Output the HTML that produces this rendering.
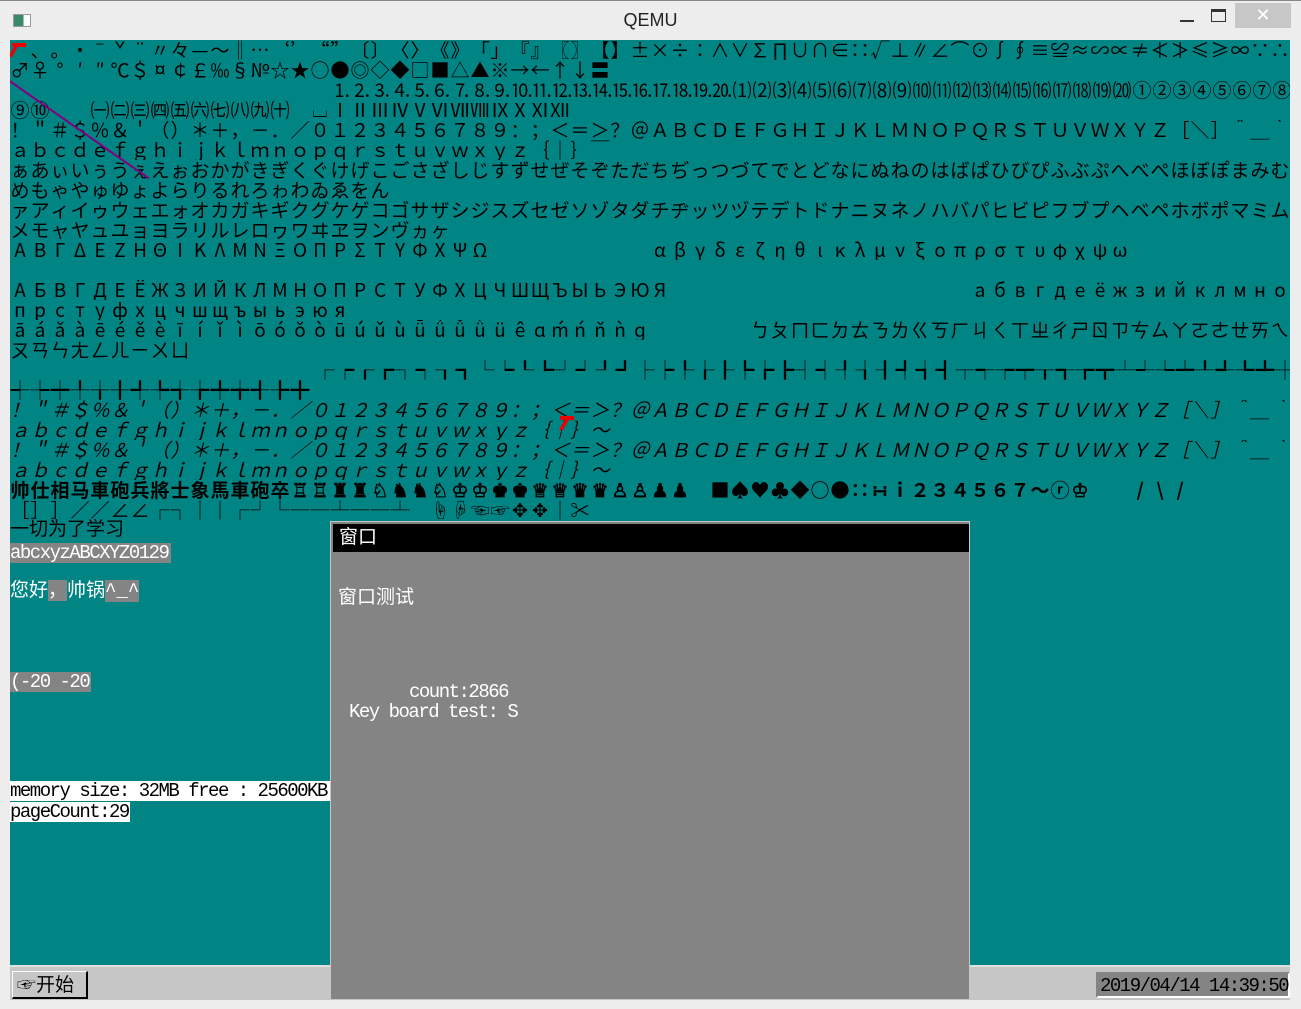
<!DOCTYPE html>
<html><head><meta charset="utf-8"><style>
*{margin:0;padding:0;box-sizing:border-box}
body{width:1301px;height:1009px;background:#ededed;position:relative;overflow:hidden;font-family:"Liberation Sans",sans-serif}
.title{position:absolute;top:0;left:0;width:1301px;height:40px;background:#ededed;border-top:1px solid #888}
.title .t{position:absolute;left:0;width:1301px;top:9px;text-align:center;font-size:18px;color:#222}
.screen{position:absolute;left:10px;top:40px;width:1280px;height:960px;background:#008484;overflow:hidden}
.row{position:absolute;left:0;height:20px;line-height:20px;font-size:19px;white-space:nowrap;color:#000;font-family:"Noto Sans CJK SC","WenQuanYi Zen Hei",sans-serif;overflow:hidden;width:1280px}
.row span{display:inline-block;width:20px;text-align:center;overflow:visible}
.m{position:absolute;font-family:"Liberation Mono",monospace;font-size:19px;line-height:20px;height:20px;letter-spacing:-1.5px;white-space:nowrap}
.cj{font-family:"Liberation Sans","Noto Sans CJK SC",sans-serif}
.task{position:absolute;left:0;top:925px;width:1280px;height:35px;background:#c6c6c6;border-top:2px solid #e0e0e0}
.win{position:absolute;left:320px;top:481px;width:640px;height:479px;background:#848484;border:1px solid #c6c6c6}
.wt{position:absolute;left:2px;top:2px;right:0;height:28px;background:#000;color:#fff;font-size:19px;line-height:28px;padding-left:6px}
</style></head><body>
<div class="title">
<div style="position:absolute;left:13px;top:13px;width:18px;height:13px;border:1px solid #999;background:linear-gradient(90deg,#3a8a6a 60%,#fff 60%)"></div>
<div class="t">QEMU</div>
<div style="position:absolute;left:1180px;top:19px;width:14px;height:2px;background:#333"></div>
<div style="position:absolute;left:1211px;top:8px;width:15px;height:13px;border:1px solid #333;border-top-width:3px"></div>
<div style="position:absolute;left:1235px;top:2px;width:56px;height:25px;background:#c7c7c7;color:#fff;text-align:center;font-size:18px;line-height:25px">✕</div>
</div>
<div class="screen">
<div class="row" style="top:0">　、。·ˉˇ¨〃々—～‖…‘’“”〔〕〈〉《》「」『』〖〗【】±×÷∶∧∨∑∏∪∩∈∷√⊥∥∠⌒⊙∫∮≡≌≈∽∝≠≮≯≤≥∞∵∴</div>
<div class="row" style="top:20px">♂♀°′″℃＄¤￠￡‰§№☆★○●◎◇◆□■△▲※→←↑↓〓</div>
<div class="row" style="top:40px;padding-left:322px">⒈⒉⒊⒋⒌⒍⒎⒏⒐⒑⒒⒓⒔⒕⒖⒗⒘⒙⒚⒛⑴⑵⑶⑷⑸⑹⑺⑻⑼⑽⑾⑿⒀⒁⒂⒃⒄⒅⒆⒇①②③④⑤⑥⑦⑧</div>
<div class="row" style="top:60px">⑨⑩　　㈠㈡㈢㈣㈤㈥㈦㈧㈨㈩　⌴ⅠⅡⅢⅣⅤⅥⅦⅧⅨⅩⅪⅫ</div>
<div class="row" style="top:80px">！＂＃＄％＆＇（）＊＋，－．／０１２３４５６７８９：；＜＝＞？＠ＡＢＣＤＥＦＧＨＩＪＫＬＭＮＯＰＱＲＳＴＵＶＷＸＹＺ［＼］＾＿｀</div>
<div class="row" style="top:100px">ａｂｃｄｅｆｇｈｉｊｋｌｍｎｏｐｑｒｓｔｕｖｗｘｙｚ｛｜｝￣</div>
<div class="row" style="top:120px">ぁあぃいぅうぇえぉおかがきぎくぐけげこごさざしじすずせぜそぞただちぢっつづてでとどなにぬねのはばぱひびぴふぶぷへべぺほぼぽまみむ</div>
<div class="row" style="top:140px">めもゃやゅゆょよらりるれろゎわゐゑをん</div>
<div class="row" style="top:160px">ァアィイゥウェエォオカガキギクグケゲコゴサザシジスズセゼソゾタダチヂッツヅテデトドナニヌネノハバパヒビピフブプヘベペホボポマミム</div>
<div class="row" style="top:180px">メモャヤュユョヨラリルレロヮワヰヱヲンヴヵヶ</div>
<div class="row" style="top:200px">ΑΒΓΔΕΖΗΘΙΚΛΜΝΞΟΠΡΣΤΥΦΧΨΩ　　　　　　　　αβγδεζηθικλμνξοπρστυφχψω</div>
<div class="row" style="top:240px">АБВГДЕЁЖЗИЙКЛМНОПРСТУФХЦЧШЩЪЫЬЭЮЯ　　　　　　　　　　　　　　　абвгдеёжзийклмно</div>
<div class="row" style="top:260px">прстуфхцчшщъыьэюя</div>
<div class="row" style="top:280px">āáǎàēéěèīíǐìōóǒòūúǔùǖǘǚǜüêɑḿńňǹɡ　　　　　ㄅㄆㄇㄈㄉㄊㄋㄌㄍㄎㄏㄐㄑㄒㄓㄔㄕㄖㄗㄘㄙㄚㄛㄜㄝㄞㄟㄠ</div>
<div class="row" style="top:300px">ㄡㄢㄣㄤㄥㄦㄧㄨㄩ</div>
<div class="row" style="top:320px;padding-left:305px">┌┍┎┏┐┑┒┓└┕┖┗┘┙┚┛├┝┞┟┠┡┢┣┤┥┦┧┨┩┪┫┬┭┮┯┰┱┲┳┴┵┶┷┸┹┺┻┼</div>
<div class="row" style="top:340px">┽┾┿╀╁╂╃╄╅╆╇╈╉╊╋</div>
<div class="row" style="top:360px;font-style:italic">！＂＃＄％＆＇（）＊＋，－．／０１２３４５６７８９：；＜＝＞？＠ＡＢＣＤＥＦＧＨＩＪＫＬＭＮＯＰＱＲＳＴＵＶＷＸＹＺ［＼］＾＿｀</div>
<div class="row" style="top:380px;font-style:italic">ａｂｃｄｅｆｇｈｉｊｋｌｍｎｏｐｑｒｓｔｕｖｗｘｙｚ｛｜｝～</div>
<div class="row" style="top:400px;font-style:italic">！＂＃＄％＆＇（）＊＋，－．／０１２３４５６７８９：；＜＝＞？＠ＡＢＣＤＥＦＧＨＩＪＫＬＭＮＯＰＱＲＳＴＵＶＷＸＹＺ［＼］＾＿｀</div>
<div class="row" style="top:420px;font-style:italic">ａｂｃｄｅｆｇｈｉｊｋｌｍｎｏｐｑｒｓｔｕｖｗｘｙｚ｛｜｝～</div>
<div class="row" style="top:440px;font-weight:bold">帅仕相马車砲兵將士象馬車砲卒♖♖♜♜♘♞♞♘♔♔♚♚♕♕♛♛♙♙♟♟　■♠♥♣◆○●∷∺ｉ２３４５６７～ⓡ♔　　/\/</div>
<div class="row" style="top:460px">［］］／／∠∠┌┐｜｜┌┘└──┴──┴　☝☟☜☞✥✥｜✂</div>
<div class="m cj" style="left:0;top:480px;color:#000;font-size:19px;letter-spacing:0">一切为了学习</div>
<div class="m" style="left:0;top:503px;color:#fff;background:#848484;width:161px">abcxyzABCXYZ0129</div>
<div class="m cj" style="left:0;top:541px;color:#fff;letter-spacing:0">您好<span style="background:#848484">，</span>帅锅<span style="background:#848484;font-family:'Liberation Mono'">^_^</span></div>
<div class="m" style="left:0;top:632px;color:#fff;background:#848484;width:81px">(-20 -20</div>
<div class="m" style="left:0;top:741px;color:#000;background:#fff;width:320px">memory size: 32MB free : 25600KB</div>
<div class="m" style="left:0;top:762px;color:#000;background:#fff;width:120px">pageCount:29</div>
<div style="position:absolute;left:0;top:40px;width:170px;height:2px;background:#800080;transform-origin:0 0;transform:rotate(35deg)"></div>
<div style="position:absolute;left:2px;top:3px;width:14px;height:4px;background:#e00"></div>
<div style="position:absolute;left:2px;top:3px;width:4px;height:14px;background:#e00;transform:skewX(-30deg)"></div>
<div style="position:absolute;left:550px;top:376px;width:14px;height:4px;background:#e00"></div>
<div style="position:absolute;left:553px;top:376px;width:4px;height:14px;background:#e00;transform:skewX(-30deg)"></div>
<div class="task">
<div style="position:absolute;left:2px;top:4px;width:76px;height:28px;border:1px solid #fff;border-right:2px solid #000;border-bottom:2px solid #000;font-size:19px;line-height:24px;padding-left:4px;font-family:'Noto Sans CJK SC',sans-serif">☞开始</div>
<div style="position:absolute;left:1086px;top:5px;width:194px;height:26px;border:2px solid #848484;border-right-color:#fff;border-bottom-color:#fff;background:#848484"><div class="m" style="left:2px;top:2px;color:#000">2019/04/14 14:39:50</div></div>
</div>
<div class="win">
<div class="wt cj">窗口</div>
<div class="m cj" style="left:7px;top:66px;color:#fff;letter-spacing:0">窗口测试</div>
<div class="m" style="left:78px;top:160px;color:#fff">count:2866</div>
<div class="m" style="left:18px;top:180px;color:#fff">Key board test:   S</div>
</div>
</div>
<script>
document.querySelectorAll('.row').forEach(function(r){
  var t=Array.from(r.textContent);r.textContent='';
  t.forEach(function(c){var s=document.createElement('span');s.textContent=c;r.appendChild(s);});
});
</script>
</body></html>
